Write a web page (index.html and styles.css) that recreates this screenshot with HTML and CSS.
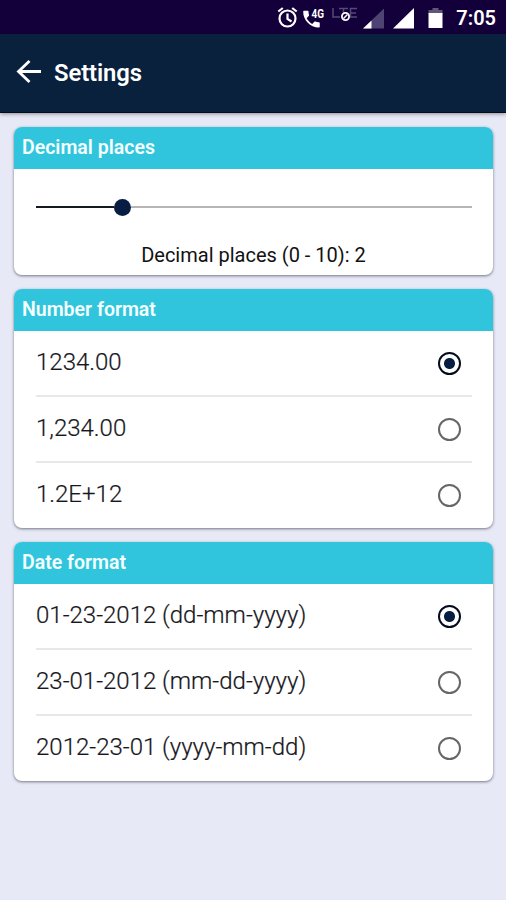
FILE: index.html
```html
<!DOCTYPE html>
<html lang="en">
<head>
<meta charset="utf-8">
<title>Settings</title>
<link rel="stylesheet" href="styles.css">
</head>
<body>
<div class="status">
  <svg class="status-icons" width="180" height="34" viewBox="0 0 180 34">
    <g fill="none" stroke="#fff" stroke-width="2.200">
      <circle cx="21.500" cy="18.500" r="8"/>
      <path d="M21.500 13.500v5.500l4 2.500M12.300 11.500l4.500-3.500M30.700 11.500l-4.500-3.500"/>
    </g>
    <path fill="#fff" transform="translate(34.500 8.200) scale(1.04)" d="M3.600 2.400h3.100c.6 0 1 .4 1 1 0 1.100.2 2.200.5 3.200.1.400 0 .8-.3 1L5.900 9.600c1.300 2.500 3.100 4.300 5.400 5.500l2-2c.3-.3.700-.4 1-.2 1 .3 2.100.5 3.200.5.600 0 1 .4 1 1v3.200c0 .6-.4 1-1 1C9.400 18.600 2.600 11.600 2.600 3.400c0-.6.400-1 1-1z"/>
    <text class="net" x="45.500" y="17.500" textLength="12.500" lengthAdjust="spacingAndGlyphs">4G</text>
    <path d="M67 8v9h7M73 8.500h9M77.500 8.500v8M91 8.500h-6.500V17H91M84 13h6" fill="none" stroke="#56487a" stroke-width="1.500"/>
    <circle cx="79.500" cy="16.500" r="3.600" fill="#13003a" stroke="#fff" stroke-width="1.800"/>
    <path d="M77.500 18.500l4-4" stroke="#fff" stroke-width="1.500"/>
    <path d="M118 8.500v20H97z" fill="#4f4373"/>
    <path d="M105.500 20.500v8H97z" fill="#fff"/>
    <path d="M148 8v20.500h-21z" fill="#fff"/>
    <path d="M166.500 8h6v2h4v4h-14v-4h4z" fill="#61557a"/>
    <path d="M162.500 13h14v15h-14z" fill="#fff"/>
  </svg>
  <span class="time">7:05</span>
</div>
<header class="bar">
  <svg class="back" width="26" height="24" viewBox="0 0 26 24"><path d="M25 11.500H2.500M13.500 1L2.500 11.500l11 10.500" fill="none" stroke="#fff" stroke-width="2.800"/></svg>
  <h1>Settings</h1>
</header>
<main>
  <section class="card">
    <h2>Decimal places</h2>
    <div class="slider"><span class="fill"></span><span class="knob"></span><span class="rest"></span></div>
    <p class="caption">Decimal places (0 - 10): 2</p>
  </section>
  <section class="card">
    <h2>Number format</h2>
    <ul>
      <li><span>1234.00</span><i class="radio on"></i></li>
      <li><span>1,234.00</span><i class="radio"></i></li>
      <li><span>1.2E+12</span><i class="radio"></i></li>
    </ul>
  </section>
  <section class="card">
    <h2>Date format</h2>
    <ul>
      <li><span>01-23-2012 (dd-mm-yyyy)</span><i class="radio on"></i></li>
      <li><span>23-01-2012 (mm-dd-yyyy)</span><i class="radio"></i></li>
      <li><span>2012-23-01 (yyyy-mm-dd)</span><i class="radio"></i></li>
    </ul>
  </section>
</main>
</body>
</html>
```

FILE: styles.css
```css
* { box-sizing: border-box; margin: 0; padding: 0; }
body {
  height: 900px;
  background: #e7e9f7;
  font-family: Roboto, sans-serif;
  overflow: hidden;
}
.status {
  display: flex;
  justify-content: flex-end;
  height: 34px;
  padding-right: 10px;
  background: #13003a;
  color: #fff;
}
.status-icons { margin-right: 10px; }
.net { fill: #fff; font-size: 12px; font-weight: 700; }
.time { font-size: 20px; font-weight: 600; line-height: 36px; }
.bar {
  display: flex;
  align-items: center;
  height: 79px;
  padding: 0 16px 2px;
  border-bottom: 1px solid #050c1a;
  background: #09213d;
  color: #fff;
  box-shadow: 0 1px 4px rgba(0, 0, 0, .4);
}
.back { margin-right: 12px; }
h1 { font-size: 23.800px; font-weight: 600; line-height: 30px; letter-spacing: -0.100px; padding-top: 2px; }
main {
  display: flex;
  flex-direction: column;
  gap: 14px;
  padding: 14px 13px 0 14px;
}
.card {
  border-radius: 8px;
  background: #fff;
  overflow: hidden;
  box-shadow: 0 1px 3px rgba(0, 0, 20, .5);
}
.card:first-child { height: 148px; }
h2 {
  height: 42px;
  padding-left: 8px;
  background: #31c5dd;
  color: #f4feff;
  font-size: 19.500px;
  font-weight: 600;
  line-height: 42px;
}
.slider { display: flex; align-items: center; margin: 29px 21px 0 22px; height: 18px; }
.fill { width: 78px; height: 2px; background: #151a20; }
.knob { width: 17px; height: 17px; border-radius: 50%; background: #071d42; }
.rest { flex: 1; height: 2px; background: #b5b5b5; }
.caption { margin-top: 27px; color: #111; font-size: 20px; line-height: 24px; text-align: center; }
ul { list-style: none; padding: 0 21px 0 22px; }
li {
  display: flex;
  align-items: center;
  justify-content: space-between;
  height: 66px;
  padding: 0 11px 0 0;
  border-bottom: 2px solid #e8e8e8;
  color: #16161c;
  font-size: 24px;
  font-weight: 300;
  -webkit-text-stroke: 0.200px #16161c;
}
li span { padding-bottom: 2px; }
li:last-child { height: 65px; border-bottom: 0; }
li:last-child span { padding-bottom: 4px; }
.radio {
  width: 23px;
  height: 23px;
  border: 2px solid #666;
  border-radius: 50%;
}
.on {
  border-color: #050c1e;
  background: radial-gradient(circle, #071d42 5px, transparent 6px);
}
```
